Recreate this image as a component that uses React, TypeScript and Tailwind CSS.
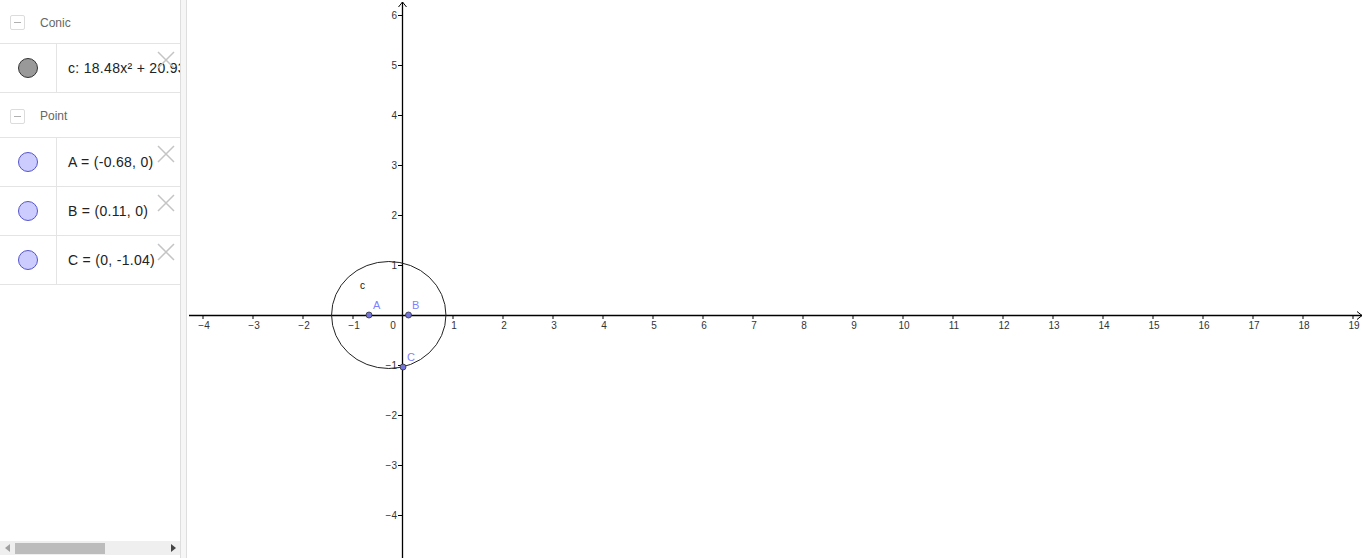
import React from 'react';

const font = { fontFamily: '"Liberation Sans", Arial, sans-serif' };

const DeleteIcon = () => (
  <svg className="absolute right-[5px] top-[7px]" width="18" height="18" viewBox="0 0 18 18">
    <path d="M1 1 L17 17 M17 1 L1 17" stroke="#c4c4c4" strokeWidth="1.5" fill="none" />
  </svg>
);

const GroupHeader = ({ label, h }: { label: string; h: string }) => (
  <div className={`flex items-center gap-[15px] pl-[10px] pt-[2px] border-b border-[#e4e4e4] ${h}`}>
    <div className="w-[15px] h-[15px] rounded-[2px] border border-[#dcdcdc] flex items-center justify-center">
      <div className="w-[7px] h-px bg-[#b0b0b0]" />
    </div>
    <span className="text-[12px] text-[#666]">{label}</span>
  </div>
);

const ItemRow = ({ text, fill, ring }: { text: string; fill: string; ring: string }) => (
  <div className="relative flex h-[49px] border-b border-[#e4e4e4]">
    <div className="w-[57px] shrink-0 flex items-center justify-center border-r border-[#e4e4e4]">
      <div className={`w-[20px] h-[20px] rounded-full border ${fill} ${ring}`} />
    </div>
    <div className="flex-1 flex items-center pl-[11px] text-[14px] tracking-[0.3px] text-[#222] whitespace-nowrap overflow-hidden">
      {text}
    </div>
    <DeleteIcon />
  </div>
);

const xs = Array.from({ length: 24 }, (_, i) => i - 4).filter((n) => n !== 0);
const ys = [6, 5, 4, 3, 2, 1, -1, -2, -3, -4];
const lbl = (n: number) => (n < 0 ? `\u2212${-n}` : `${n}`);

const Graph = () => (
  <svg className="block" width="1179" height="558" viewBox="187 0 1179 558" style={font}>
    {/* axes */}
    <line x1="189" y1="315.5" x2="1362" y2="315.5" stroke="#000" strokeWidth="1.3" />
    <line x1="402.5" y1="2" x2="402.5" y2="558" stroke="#000" strokeWidth="1.3" />
    <path d="M398.5 7 L402.5 2 L406.5 7" stroke="#000" strokeWidth="1" fill="none" />
    <path d="M1357 311.5 L1362 315.5 L1357 319.5" stroke="#000" strokeWidth="1" fill="none" />
    {xs.map((n) => {
      const x = 403 + n * 50;
      return (
        <g key={`x${n}`}>
          <line x1={x} y1="315" x2={x} y2="319" stroke="#000" strokeWidth="1" />
          <text x={x + 1} y="329" fontSize="10" fill="#333" textAnchor="middle">{lbl(n)}</text>
        </g>
      );
    })}
    <text x="393" y="329" fontSize="10" fill="#333" textAnchor="middle">0</text>
    {ys.map((n) => {
      const y = 315 - n * 50;
      return (
        <g key={`y${n}`}>
          <line x1="398" y1={y + 0.5} x2="403" y2={y + 0.5} stroke="#000" strokeWidth="1" />
          <text x="397" y={y + 4} fontSize="10" fill="#333" textAnchor="end">{lbl(n)}</text>
        </g>
      );
    })}
    {/* conic */}
    <ellipse cx="388.75" cy="315" rx="57.2" ry="53.5" stroke="#222" strokeWidth="1" fill="none" />
    <text x="360" y="289" fontSize="10" fill="#111">c</text>
    {/* points */}
    <circle cx="369" cy="315" r="3" fill="#7373dd" stroke="#333" strokeWidth="0.8" />
    <circle cx="408.5" cy="315" r="3" fill="#7373dd" stroke="#333" strokeWidth="0.8" />
    <circle cx="403" cy="367" r="3" fill="#7373dd" stroke="#333" strokeWidth="0.8" />
    <text x="373" y="309" fontSize="11" fill="#7f7fff">A</text>
    <text x="412" y="309" fontSize="11" fill="#7f7fff">B</text>
    <text x="407" y="361" fontSize="11" fill="#7f7fff">C</text>
  </svg>
);

export default function App() {
  return (
    <div className="flex h-[558px] w-[1366px] overflow-hidden bg-white" style={font}>
      <div className="w-[180px] shrink-0 flex flex-col">
        <div className="flex-1">
          <GroupHeader label="Conic" h="h-[44px]" />
          <ItemRow text="c: 18.48x² + 20.93y² + 10.63x − 22.63 = 0" fill="bg-[#999999]" ring="border-[#333]" />
          <GroupHeader label="Point" h="h-[45px]" />
          <ItemRow text="A = (-0.68, 0)" fill="bg-[#ccccff]" ring="border-[#5555cc]" />
          <ItemRow text="B = (0.11, 0)" fill="bg-[#ccccff]" ring="border-[#5555cc]" />
          <ItemRow text="C = (0, -1.04)" fill="bg-[#ccccff]" ring="border-[#5555cc]" />
        </div>
        <div className="h-[14px] bg-[#efefef] flex items-center pl-[5px] pr-[4px] gap-[5px]">
          <div className="w-0 h-0 border-y-[4px] border-y-transparent border-r-[5px] border-r-[#a0a0a0]" />
          <div className="w-[90px] h-[11px] bg-[#bcbcbc]" />
          <div className="flex-1" />
          <div className="w-0 h-0 border-y-[4px] border-y-transparent border-l-[5px] border-l-[#444]" />
        </div>
        <div className="h-[3px]" />
      </div>
      <div className="w-[7px] shrink-0 bg-[#f6f6f6] border-l border-r border-[#dedede]" />
      <Graph />
    </div>
  );
}
